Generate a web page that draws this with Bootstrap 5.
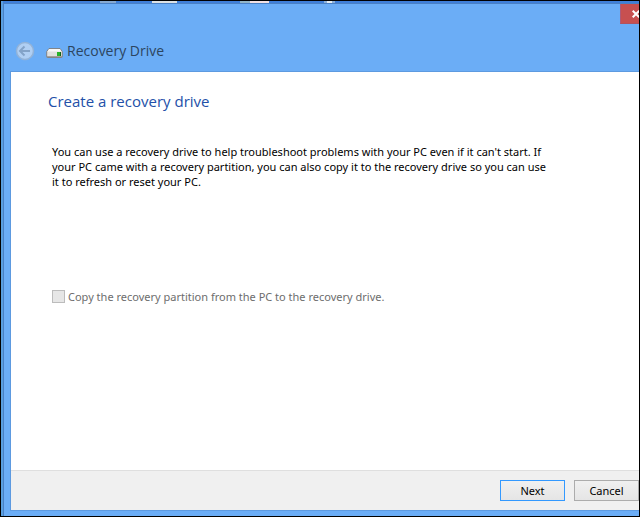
<!DOCTYPE html>
<html lang="en">
<head>
<meta charset="utf-8">
<meta name="viewport" content="width=device-width, initial-scale=1">
<title>Recovery Drive</title>
<link href="https://cdn.jsdelivr.net/npm/bootstrap@5.3.0/dist/css/bootstrap.min.css" rel="stylesheet">
<style>
  body { font-family: "Noto Sans", "Open Sans", sans-serif; font-size: 11px; line-height: 15px; color: #000; }
  .desktop { border: 1px solid #000; padding: 2px 0 0 2px; background: linear-gradient(90deg, #5a9fe0 0 2px, #3f7fd9 2px); }
  .wallpaper { top: 0; left: 0; }
  .wizard { background: #6badf6; border-top: 1px solid #4a80c4; border-left: 1px solid #4a80c4; padding: 0 0 5px 6px; }
  .close-btn { width: 31px; height: 20px; margin-right: -12px; background: #c75050; border: 0; border-left: 1px solid #ac5a78; border-bottom: 1px solid #b0525f; }
  .title-row { height: 47px; gap: 11px; padding: 7px 0 0 5px; }
  .back-btn { width: 20px; height: 20px; }
  .title-text { font-family: "Open Sans", sans-serif; font-size: 14px; line-height: 20px; color: #2c4560; }
  .pane { border: 1px solid #5d9ae0; border-right: 0; }
  .page-body { padding: 19px 40px 24px 37px; }
  .heading { font-family: "Open Sans", sans-serif; font-size: 15px; line-height: 20px; color: #2350a8; margin-bottom: 33px; }
  .inset { padding-left: 4px; }
  .copy-option { margin-top: 100px; gap: 3px; }
  .copy-option .form-check-input { width: 13px; height: 13px; border: 1px solid #bcbcbc; border-radius: 0; background-color: #e6e6e6; opacity: 1; }
  .copy-option .form-check-input:disabled ~ .form-check-label { opacity: 1; color: #6d6d6d; }
  .actions { background: #f0f0f0; border-top: 1px solid #dfdfdf; gap: 9px; padding: 9px 0; }
  .dlg-btn { width: 65px; height: 21px; padding: 0; font-size: 11px; line-height: 18px; border-radius: 0; color: #000; background: linear-gradient(#f0f0f0, #e5e5e5); border: 1px solid #acacac; }
  .dlg-btn.default { border-color: #3399ff; }
</style>
</head>
<body>
<div class="desktop position-relative d-flex flex-column min-vh-100 overflow-hidden">
  <svg class="wallpaper position-absolute" width="340" height="2" aria-hidden="true">
    <rect x="99" width="16" height="2" fill="#85a9d2"/>
    <rect x="151" width="25" height="2" fill="#dce2e5"/>
    <rect x="239" width="10" height="2" fill="#91b5c8"/>
    <rect x="249" width="19" height="2" fill="#f1e1e4"/>
    <rect x="323" width="11" height="2" fill="#8cb2dc"/><rect x="326" width="5" height="2" fill="#e5eef4"/>
  </svg>
  <main class="wizard d-flex flex-column flex-grow-1">
    <div class="d-flex justify-content-end">
      <button type="button" class="close-btn p-0 d-flex align-items-center justify-content-center" aria-label="Close">
        <svg width="8" height="8" viewBox="0 0 8 8" stroke="#fff" stroke-width="2"><path d="M.7.7l6.6 6.6M7.3.7L.7 7.3"/></svg>
      </button>
    </div>
    <header class="title-row d-flex align-items-center">
      <button type="button" class="back-btn btn p-0 border-0 d-flex" aria-label="Back">
        <svg width="20" height="20" viewBox="0 0 20 20" fill="none">
          <circle cx="10" cy="10" r="8.5" fill="#b0cff3" stroke="#93b3d8" stroke-width="1.5"/>
          <path d="M15 10H6M9.500 5.500L5 10l4.500 4.500" stroke="#83a3c8" stroke-width="2"/>
        </svg>
      </button>
      <div class="d-flex align-items-center gap-1">
        <svg width="17" height="10" viewBox="0 0 17 10" class="mt-1" aria-hidden="true">
          <path d="M3 .5h11l2.300 3v5.200q0 .8-.8.8h-14q-.8 0-.8-.8V3.500z" fill="#e0e0de" stroke="#77736f" stroke-width=".8"/>
          <path d="M3.200 1h10.600l1.700 2.500h-14z" fill="#f8f8f7"/>
          <path d="M1 8.300h15v1H1z" fill="#8d8580"/>
          <path d="M11 4h3v4h-3z" fill="#29b329"/><path d="M14 4h1v4h-1z" fill="#16671c"/>
        </svg>
        <h1 class="title-text fw-normal mb-0">Recovery Drive</h1>
      </div>
    </header>
    <section class="pane bg-white d-flex flex-column flex-grow-1">
      <div class="page-body flex-grow-1">
        <h2 class="heading fw-normal">Create a recovery drive</h2>
        <div class="inset">
          <p class="mb-0">You can use a recovery drive to help troubleshoot problems with your PC even if it can't start. If<br>your PC came with a recovery partition, you can also copy it to the recovery drive so you can use<br>it to refresh or reset your PC.</p>
          <div class="copy-option d-flex align-items-center">
            <input class="form-check-input m-0" type="checkbox" id="copyPartition" disabled>
            <label class="form-check-label" for="copyPartition">Copy the recovery partition from the PC to the recovery drive.</label>
          </div>
        </div>
      </div>
      <footer class="actions d-flex justify-content-end">
        <button type="button" class="dlg-btn default btn">Next</button>
        <button type="button" class="dlg-btn btn">Cancel</button>
      </footer>
    </section>
  </main>
</div>
<script src="https://cdn.jsdelivr.net/npm/bootstrap@5.3.0/dist/js/bootstrap.bundle.min.js"></script>
</body>
</html>
